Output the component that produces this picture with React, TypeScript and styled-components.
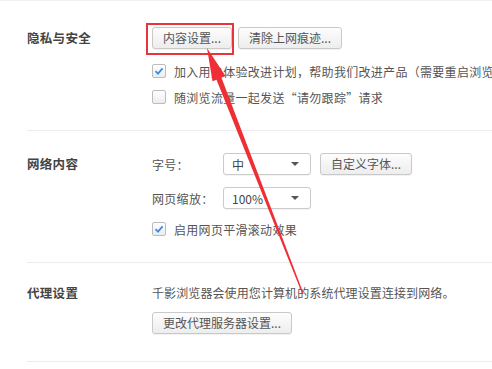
import styled, { createGlobalStyle } from 'styled-components';

const GlobalStyle = createGlobalStyle`
  html, body {
    margin: 0;
    padding: 0;
    background: #fff;
  }
  body {
    font-family: "Noto Sans CJK SC", "Noto Sans", sans-serif;
    font-size: 12px;
    color: #555;
  }
`;

const Page = styled.div`
  position: relative;
  width: 492px;
  height: 369px;
  overflow: hidden;
  border-top: 1px solid #f1f1f1;
  box-sizing: border-box;
`;

const Section = styled.section<{ $top: number; $bottom: number }>`
  display: grid;
  grid-template-columns: 125px 1fr;
  margin-left: 27px;
  padding: ${(p) => p.$top}px 0 ${(p) => p.$bottom}px;
  border-bottom: 1px solid #ececec;
`;

const Label = styled.div`
  font-weight: bold;
  font-size: 12.5px;
  color: #444;
  line-height: 22px;
  letter-spacing: 0.3px;
`;

const Content = styled.div`
  display: flex;
  flex-direction: column;
  min-width: 0;
`;

const Row = styled.div<{ $mt?: number }>`
  display: flex;
  align-items: center;
  height: 22px;
  margin-top: ${(p) => p.$mt ?? 0}px;
  white-space: nowrap;
`;

const Button = styled.button<{ $ml?: number }>`
  height: 22px;
  padding: 0 10px;
  margin-left: ${(p) => p.$ml ?? 0}px;
  border: 1px solid #c9c9c9;
  border-radius: 3px;
  background: linear-gradient(#fdfdfd, #ededed);
  box-shadow: 0 1px 1px rgba(0, 0, 0, 0.06);
  font-family: inherit;
  font-size: 12px;
  color: #555;
  line-height: 20px;
  white-space: nowrap;
`;

const Highlight = styled.span`
  position: relative;
  display: inline-flex;
  &::after {
    content: '';
    position: absolute;
    top: -4px;
    left: -6px;
    right: -2px;
    bottom: -6px;
    border: 2px solid #e8343a;
    pointer-events: none;
  }
`;

const CheckRow = styled.label<{ $mt?: number }>`
  display: flex;
  align-items: center;
  gap: 8px;
  height: 26px;
  margin-top: ${(p) => p.$mt ?? 0}px;
  white-space: nowrap;
  overflow: hidden;
  letter-spacing: 0.3px;
  color: #555;
`;

const Box = styled.span`
  flex: none;
  width: 12px;
  height: 12px;
  border: 1px solid #bcbcbc;
  border-radius: 2px;
  background: linear-gradient(#fff, #ececec);
  display: flex;
  align-items: center;
  justify-content: center;
`;

const FieldLabel = styled.span`
  width: 71px;
  letter-spacing: 0.3px;
`;

const Select = styled.div`
  box-sizing: border-box;
  width: 88px;
  height: 22px;
  padding: 0 8px;
  border: 1px solid #cbcbcb;
  border-radius: 3px;
  background: #fff;
  box-shadow: 0 1px 1px rgba(0, 0, 0, 0.05);
  display: flex;
  align-items: center;
  justify-content: space-between;
  color: #444;
`;

const Caret = styled.span`
  width: 0;
  height: 0;
  border-left: 4px solid transparent;
  border-right: 4px solid transparent;
  border-top: 4px solid #555;
  margin-right: 3px;
`;

const Text = styled.div`
  line-height: 22px;
  white-space: nowrap;
  letter-spacing: 0.1px;
`;

const Overlay = styled.svg`
  position: absolute;
  left: 0;
  top: 0;
  pointer-events: none;
`;

function Check({ on }: { on?: boolean }) {
  return (
    <Box>
      {on && (
        <svg width="10" height="10" viewBox="0 0 10 10">
          <path d="M1.5 5.2 L4 7.6 L8.6 2.4" fill="none" stroke="#3a8ee6" strokeWidth="1.8" />
        </svg>
      )}
    </Box>
  );
}

export default function App() {
  return (
    <>
      <GlobalStyle />
      <Page>
        <Section $top={26} $bottom={20}>
          <Label>隐私与安全</Label>
          <Content>
            <Row>
              <Highlight>
                <Button>内容设置...</Button>
              </Highlight>
              <Button $ml={6}>清除上网痕迹...</Button>
            </Row>
            <CheckRow $mt={9}>
              <Check on />
              加入用户体验改进计划，帮助我们改进产品（需要重启浏览器）
            </CheckRow>
            <CheckRow>
              <Check />
              随浏览流量一起发送“请勿跟踪”请求
            </CheckRow>
          </Content>
        </Section>

        <Section $top={22} $bottom={20}>
          <Label>网络内容</Label>
          <Content>
            <Row>
              <FieldLabel>字号：</FieldLabel>
              <Select>
                中<Caret />
              </Select>
              <Button $ml={9}>自定义字体...</Button>
            </Row>
            <Row $mt={12}>
              <FieldLabel>网页缩放：</FieldLabel>
              <Select>
                100%<Caret />
              </Select>
            </Row>
            <CheckRow $mt={7}>
              <Check on />
              启用网页平滑滚动效果
            </CheckRow>
          </Content>
        </Section>

        <Section $top={19} $bottom={27}>
          <Label>代理设置</Label>
          <Content>
            <Text>千影浏览器会使用您计算机的系统代理设置连接到网络。</Text>
            <Row $mt={8}>
              <Button>更改代理服务器设置...</Button>
            </Row>
          </Content>
        </Section>

        <Overlay width="492" height="369" viewBox="0 0 492 369">
          <polygon
            fill="#ee2f36"
            points="207,47 225.5,75.1 221.5,76.7 303.6,292.8 302.4,293.2 216.5,78.7 212.5,80.2"
          />
        </Overlay>
      </Page>
    </>
  );
}
